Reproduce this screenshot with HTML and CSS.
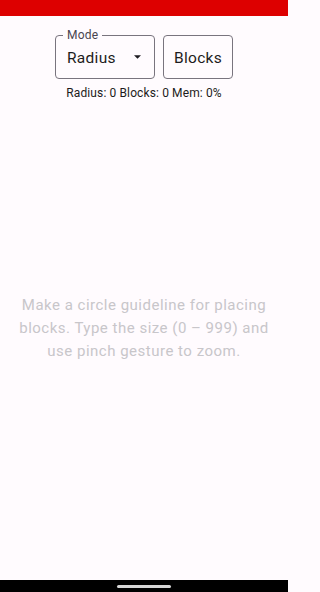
FILE: index.html
```html
<!DOCTYPE html>
<html>
<head>
<meta charset="utf-8">
<link rel="stylesheet" href="styles.css">
</head>
<body>
<div class="screen">
  <div class="statusbar"></div>
  <div class="content">
    <div class="controls">
      <div class="select">
        <span class="select-label">Mode</span>
        <span class="select-value">Radius</span>
        <svg class="caret" width="10" height="5" viewBox="0 0 10 5"><path d="M0 0 L10 0 L5 5 Z" fill="#1d1b20"/></svg>
      </div>
      <div class="button">Blocks</div>
    </div>
    <div class="stats">Radius: 0 Blocks: 0 Mem: 0%</div>
    <div class="hint">Make a circle guideline for placing blocks. Type the size (0 – 999) and use pinch gesture to zoom.</div>
  </div>
  <div class="navbar"><div class="handle"></div></div>
</div>
</body>
</html>
```

FILE: styles.css
```css
html, body {
  margin: 0;
  padding: 0;
}
body {
  background: #fffbfe;
  font-family: Roboto, "Noto Sans", sans-serif;
  color: #1d1b20;
}
.screen {
  width: 288px;
  height: 592px;
  display: flex;
  flex-direction: column;
  overflow: hidden;
}
.statusbar {
  height: 16px;
  background: #dd0000;
  flex: none;
}
.content {
  flex: 1;
  display: flex;
  flex-direction: column;
  align-items: center;
}
.controls {
  display: flex;
  gap: 8px;
  margin-top: 19px;
}
.select {
  position: relative;
  width: 100px;
  height: 44px;
  box-sizing: border-box;
  border: 1px solid #79747e;
  border-radius: 4px;
  display: flex;
  align-items: center;
  padding: 0 13px 0 11px;
}
.select-label {
  position: absolute;
  top: -8px;
  left: 7px;
  padding: 0 4px;
  background: #fffbfe;
  font-size: 12px;
  line-height: 14px;
  letter-spacing: 0.2px;
  color: #49454f;
}
.select-value {
  font-size: 15.5px;
  line-height: 20px;
  letter-spacing: 0.3px;
  flex: 1;
  padding-top: 1px;
}
.caret {
  width: 7px;
  height: 4px;
}
.button {
  width: 70px;
  height: 44px;
  box-sizing: border-box;
  border: 1px solid #79747e;
  border-radius: 4px;
  display: flex;
  align-items: center;
  justify-content: center;
  font-size: 15.5px;
  line-height: 20px;
  letter-spacing: 0.3px;
  padding-top: 1px;
}
.stats {
  margin-top: 6px;
  font-size: 12px;
  line-height: 16px;
  letter-spacing: 0.12px;
  color: #1d1b20;
}
.hint {
  margin-top: 193px;
  width: 270px;
  text-align: center;
  font-size: 15px;
  line-height: 23px;
  letter-spacing: 0.5px;
  color: #c8c6ca;
}
.navbar {
  height: 12px;
  background: #000;
  flex: none;
  display: flex;
  justify-content: center;
  padding-top: 5px;
  box-sizing: border-box;
}
.handle {
  width: 54px;
  height: 3px;
  border-radius: 2px;
  background: #d6d6d6;
}
```
